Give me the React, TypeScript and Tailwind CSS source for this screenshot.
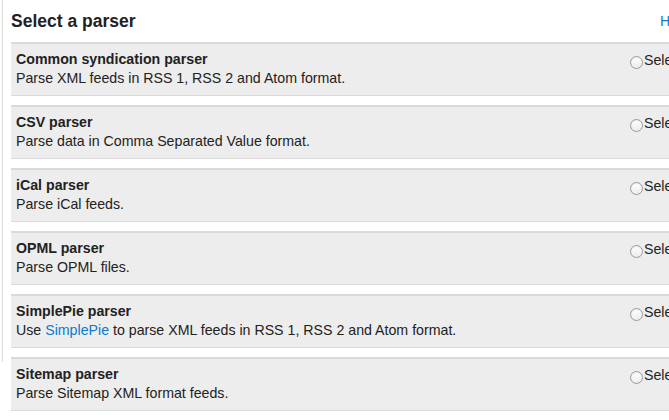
import React from "react";

const parsers: { title: string; desc: React.ReactNode }[] = [
  { title: "Common syndication parser", desc: "Parse XML feeds in RSS 1, RSS 2 and Atom format." },
  { title: "CSV parser", desc: "Parse data in Comma Separated Value format." },
  { title: "iCal parser", desc: "Parse iCal feeds." },
  { title: "OPML parser", desc: "Parse OPML files." },
  {
    title: "SimplePie parser",
    desc: (
      <>
        Use <a className="text-[#0b7ad1]">SimplePie</a> to parse XML feeds in RSS 1, RSS 2 and Atom format.
      </>
    ),
  },
  { title: "Sitemap parser", desc: "Parse Sitemap XML format feeds." },
];

function Radio() {
  return (
    <span className="mt-[6px] inline-block h-[13px] w-[13px] shrink-0 rounded-full border border-[#9a9a9a] bg-gradient-to-b from-white to-[#ececec] shadow-[inset_0_1px_1px_rgba(0,0,0,0.08)]" />
  );
}

export default function App() {
  return (
    <div className="flex h-[420px] w-[669px] overflow-hidden bg-white font-['Liberation_Sans',Arial,sans-serif] text-[#222]">
      <div className="ml-[2px] h-[362px] w-px shrink-0 bg-[#dcdcdc]" />
      <div className="ml-[8px] w-[760px] shrink-0">
        <div className="grid h-[42px] grid-cols-[649px_1fr] items-center">
          <h2 className="pt-[1px] text-[17.5px] font-bold leading-none">Select a parser</h2>
          <a className="text-[14px] text-[#0b7ad1]">Help</a>
        </div>
        {parsers.map((p) => (
          <div
            key={p.title}
            className="mb-[9px] grid grid-cols-[619px_1fr] border-t-2 border-b border-t-[#dadada] border-b-[#dadada] bg-[#ededed] pt-[6px] pb-[7px] text-[14.2px] leading-[19px]"
          >
            <div className="pl-[5px]">
              <div className="font-bold">{p.title}</div>
              <div>{p.desc}</div>
            </div>
            <div className="flex items-start gap-[1px]">
              <Radio />
              <span className="pt-[1px]">Select</span>
            </div>
          </div>
        ))}
      </div>
    </div>
  );
}
